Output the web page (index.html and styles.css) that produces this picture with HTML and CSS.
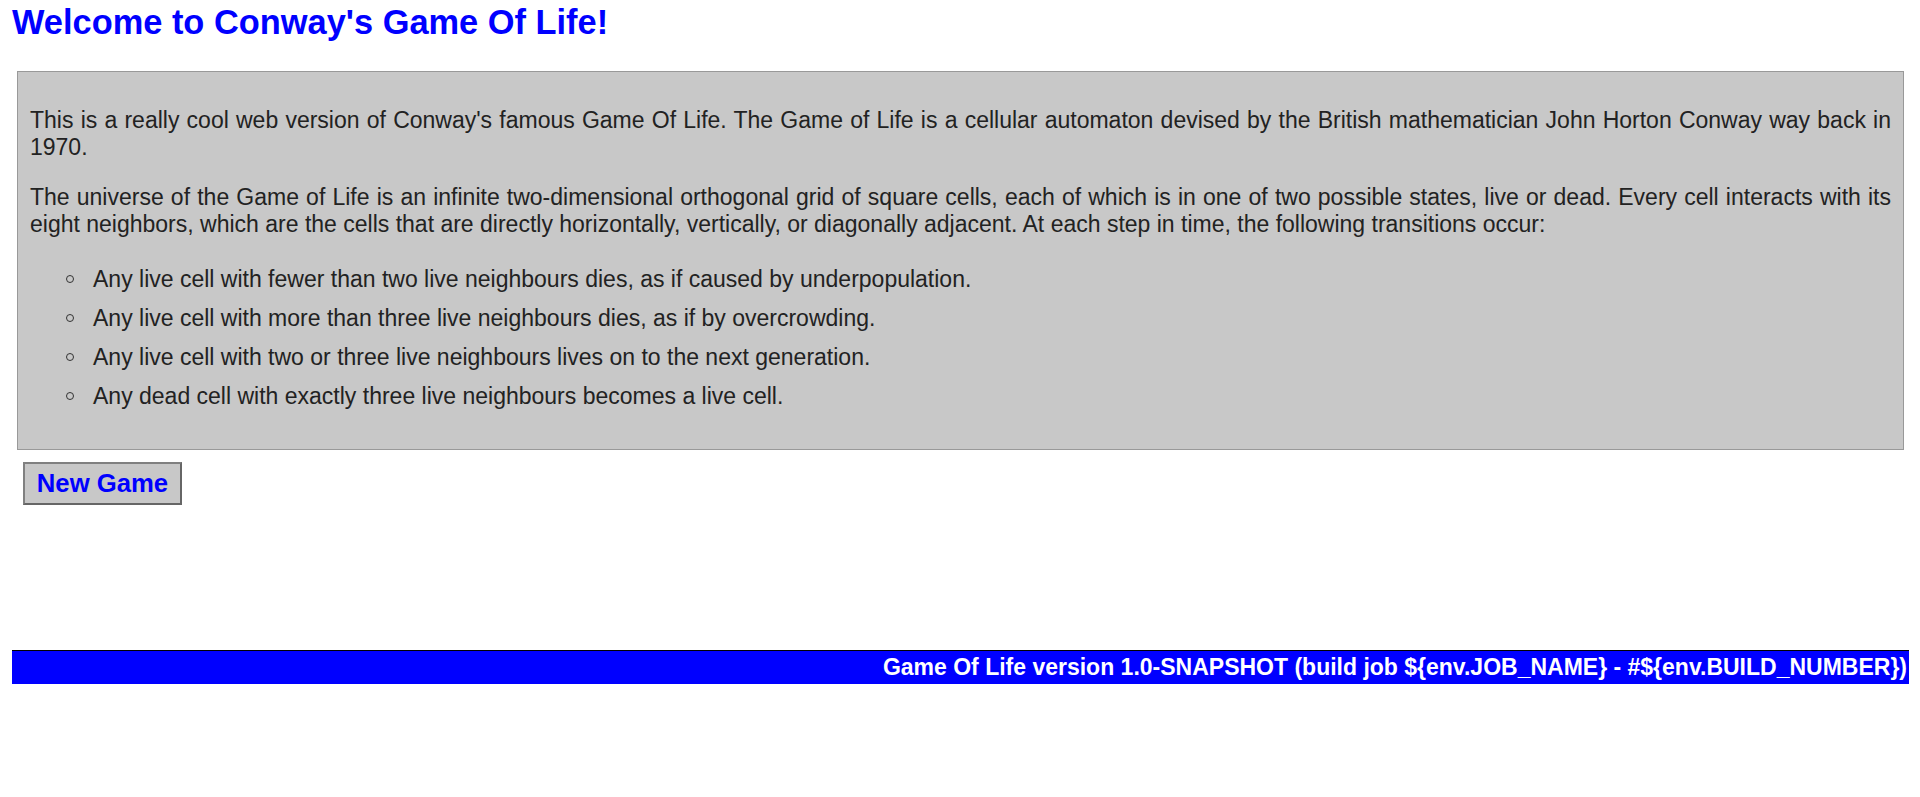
FILE: index.html
```html
<!DOCTYPE html>
<html lang="en">
<head>
<meta charset="utf-8">
<title>Conway's Game Of Life</title>
<link rel="stylesheet" href="styles.css">
</head>
<body>
<div class="page">
  <h1 class="title">Welcome to Conway's Game Of Life!</h1>
  <div class="intro">
    <p>This is a really cool web version of Conway's famous Game Of Life. The Game of Life is a cellular automaton devised by the British mathematician John Horton Conway way back in 1970.</p>
    <p>The universe of the Game of Life is an infinite two-dimensional orthogonal grid of square cells, each of which is in one of two possible states, live or dead. Every cell interacts with its eight neighbors, which are the cells that are directly horizontally, vertically, or diagonally adjacent. At each step in time, the following transitions occur:</p>
    <ul class="rules">
      <li>Any live cell with fewer than two live neighbours dies, as if caused by underpopulation.</li>
      <li>Any live cell with more than three live neighbours dies, as if by overcrowding.</li>
      <li>Any live cell with two or three live neighbours lives on to the next generation.</li>
      <li>Any dead cell with exactly three live neighbours becomes a live cell.</li>
    </ul>
  </div>
  <div class="actions">
    <button class="new-game" type="button">New Game</button>
  </div>
  <div class="footer">Game Of Life version 1.0-SNAPSHOT (build job ${env.JOB_NAME} - #${env.BUILD_NUMBER})</div>
</div>
</body>
</html>
```

FILE: styles.css
```css
html, body {
  margin: 0;
  padding: 0;
  background: #ffffff;
}

body {
  font-family: "Liberation Sans", Arial, sans-serif;
  color: #222222;
}

.page {
  padding: 3px 11px 0 12px;
}

.title {
  margin: 0 0 29px 0;
  font-size: 34.4px;
  line-height: 39px;
  font-weight: bold;
  color: #0000ff;
}

.intro {
  margin: 0 5px;
  padding: 12px 12px;
  background: #c8c8c8;
  border: 1px solid #999999;
  font-size: 23px;
  line-height: 27px;
  text-align: justify;
}

.intro p {
  margin: 23px 0;
}

.rules {
  margin: 23px 0 20px 0;
  padding-left: 63px;
  list-style: none;
  text-align: left;
}

.rules li {
  padding: 4.5px 0 7.5px 0;
}

.rules li::before {
  content: "";
  display: inline-block;
  box-sizing: border-box;
  width: 8px;
  height: 8px;
  margin-left: -27px;
  margin-right: 19px;
  border: 1px solid #333333;
  border-radius: 50%;
  vertical-align: middle;
  position: relative;
  top: -1px;
}

.actions {
  padding: 12px 0 0 11px;
}

.new-game {
  display: block;
  margin: 0;
  width: 159px;
  height: 43px;
  padding: 0;
  background: #c8c8c8;
  border: 2px solid #808080;
  border-right-color: #666666;
  border-bottom-color: #666666;
  font-family: "Liberation Sans", Arial, sans-serif;
  font-size: 25.7px;
  font-weight: bold;
  color: #0000ff;
}

.footer {
  margin-top: 145px;
  border-top: 1px solid #000000;
  background: #0000ff;
  color: #ffffff;
  font-size: 23px;
  font-weight: bold;
  line-height: 33px;
  text-align: right;
  padding-right: 2px;
}
```
